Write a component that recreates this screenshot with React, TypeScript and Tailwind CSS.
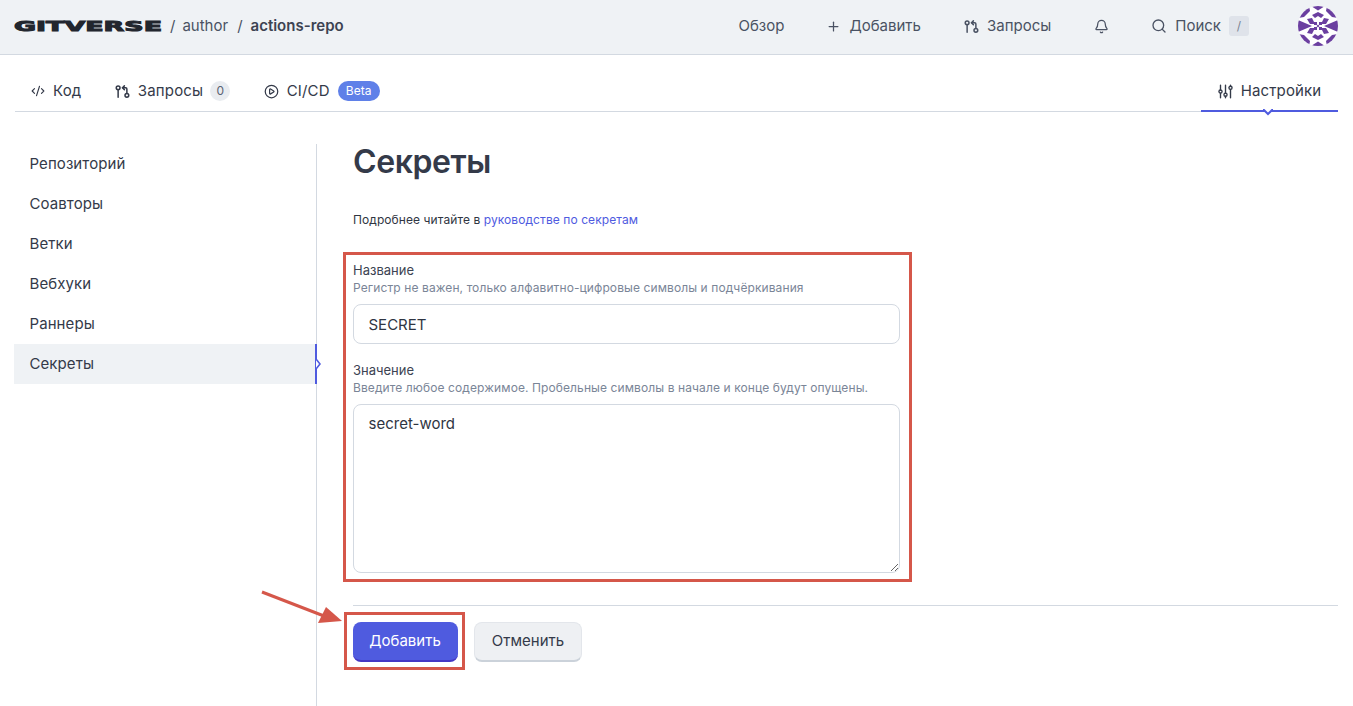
import React from "react";
import { CodeXml, GitPullRequestArrow, CirclePlay, Plus, Bell, Search } from "lucide-react";

function Avatar() {
  const p = "#6b3fa0";
  return (
    <svg width="40" height="40" viewBox="0 0 40 40" className="shrink-0">
      <defs>
        <clipPath id="av"><circle cx="20" cy="20" r="20" /></clipPath>
      </defs>
      <g clipPath="url(#av)">
        <rect width="40" height="40" fill="#ffffff" />
        <g fill={p}>
          {/* top and bottom caps */}
          <path d="M13 0h14l-7 4.5z" />
          <path d="M13 40h14l-7-4.5z" />
          {/* rim corners */}
          <path d="M0 0h11l1 5-6 6-6 1z" />
          <path d="M40 0h-11l-1 5 6 6 6 1z" />
          <path d="M0 40h11l1-5-6-6-6-1z" />
          <path d="M40 40h-11l-1-5 6-6 6-1z" />
          {/* side triangles pointing inwards */}
          <path d="M0 14l14 6-14 6z" />
          <path d="M40 14l-14 6 14 6z" />
          {/* upper wings */}
          <path d="M9 13l5-1 3 6-5 0z" />
          <path d="M31 13l-5-1-3 6 5 0z" />
          <path d="M14 9l6-3 6 3-3 3-3-2-3 2z" />
          {/* lower wings */}
          <path d="M9 27l5 1 3-6-5 0z" />
          <path d="M31 27l-5 1-3-6 5 0z" />
          <path d="M14 31l6 3 6-3-3-3-3 2-3-2z" />
          {/* centre */}
          <rect x="16" y="16" width="3" height="3" />
          <rect x="21" y="16" width="3" height="3" />
          <rect x="16" y="21" width="3" height="3" />
          <rect x="21" y="21" width="3" height="3" />
          <path d="M20 18.5l1.5 1.5-1.5 1.5-1.5-1.5z" />
        </g>
      </g>
    </svg>
  );
}

function Logo() {
  return (
    <svg width="150" height="16" viewBox="0 0 150 16" className="shrink-0">
      <text
        x="0"
        y="13"
        textLength="148"
        lengthAdjust="spacingAndGlyphs"
        fontFamily="'DejaVu Sans', sans-serif"
        fontWeight="900"
        fontSize="14.5"
        fill="#22262e"
        stroke="#22262e"
        strokeWidth="1"
      >
        GITVERSE
      </text>
    </svg>
  );
}

function SettingsIcon() {
  return (
    <svg width="15" height="15" viewBox="0 0 24 24" fill="none" stroke="currentColor" strokeWidth="2.2" strokeLinecap="round">
      <path d="M4 2v7.5M4 14.5V22" />
      <circle cx="4" cy="12" r="2.5" />
      <path d="M12 2v12.5M12 19.5V22" />
      <circle cx="12" cy="17" r="2.5" />
      <path d="M20 2v1.5M20 8.5V22" />
      <circle cx="20" cy="6" r="2.5" />
    </svg>
  );
}

function TopLink({ icon, children }: { icon?: React.ReactNode; children?: React.ReactNode }) {
  return (
    <div className="flex items-center gap-2 text-[15px] text-[#4a5263]">
      {icon}
      {children}
    </div>
  );
}

function Tab({ icon, children, extra }: { icon: React.ReactNode; children: React.ReactNode; extra?: React.ReactNode }) {
  return (
    <div className="flex h-[40px] items-center gap-2 pl-4 pr-[17.5px] text-[15px] text-[#343a49]">
      {icon}
      <span className="tracking-[0.15px]">{children}</span>
      {extra}
    </div>
  );
}

function Caret({ className }: { className: string }) {
  return (
    <svg className={className} width="10" height="7" viewBox="0 0 10 7">
      <path d="M0 0 L5 5 L10 0" fill="#ffffff" stroke="#4f5bdf" strokeWidth="2" />
    </svg>
  );
}

const sideItems = ["Репозиторий", "Соавторы", "Ветки", "Вебхуки", "Раннеры", "Секреты"];

export default function App() {
  return (
    <div className="relative h-[706px] w-[1353px] overflow-hidden bg-white font-['Inter','Noto_Sans',sans-serif]">
      <header className="flex h-[55px] items-center justify-between border-b border-[#d3d9e1] bg-[#eff2f5] pb-[2px] pl-[14px] pr-[15px]">
        <div className="flex items-center text-[15px] text-[#4a5263]">
          <Logo />
          <span className="ml-[6px]">/</span>
          <span className="ml-[7px]">author</span>
          <span className="ml-[9px]">/</span>
          <span className="ml-[8px] font-semibold text-[#3c4352]">actions-repo</span>
        </div>
        <div className="flex items-center">
          <TopLink>Обзор</TopLink>
          <div className="ml-[42px]">
            <TopLink icon={<Plus size={15} strokeWidth={2} />}>Добавить</TopLink>
          </div>
          <div className="ml-[43px]">
            <TopLink icon={<GitPullRequestArrow size={15} strokeWidth={2.4} />}>Запросы</TopLink>
          </div>
          <div className="ml-[43px]">
            <Bell size={15} strokeWidth={2} className="text-[#4a5263]" />
          </div>
          <div className="ml-[43px] flex items-center gap-2">
            <TopLink icon={<Search size={16} strokeWidth={2} className="-ml-px" />}>Поиск</TopLink>
            <span className="flex h-[20px] w-[20px] items-center justify-center rounded-[3px] bg-[#dfe3ea] text-[12px] text-[#7a8394]">/</span>
          </div>
          <div className="ml-[49px]">
            <Avatar />
          </div>
        </div>
      </header>

      <nav className="relative mx-[15px] flex h-[57px] items-end justify-between border-b border-[#d3d9e1]">
        <div className="flex items-center">
          <Tab icon={<CodeXml size={14} strokeWidth={2} />}>Код</Tab>
          <Tab
            icon={<GitPullRequestArrow size={15} strokeWidth={2.4} />}
            extra={<span className="-ml-px flex h-[20px] w-[20px] items-center justify-center rounded-full bg-[#e9ecf0] text-[12px] text-[#5a6272]">0</span>}
          >
            Запросы
          </Tab>
          <Tab
            icon={<CirclePlay size={15} strokeWidth={2} />}
            extra={<span className="flex h-[20px] w-[42px] items-center justify-center rounded-full bg-[#5f80e8] text-[12px] text-white">Beta</span>}
          >
            CI/CD
          </Tab>
        </div>
        <div className="relative -mb-px flex h-[40px] w-[137px] items-center justify-center gap-2 border-b-2 border-[#4f5bdf] text-[15px] text-[#343a49]">
          <SettingsIcon />
          <span className="tracking-[0.1px]">Настройки</span>
          <Caret className="absolute -bottom-[6px] left-[62px]" />
        </div>
      </nav>

      <div className="flex pl-[14px] pr-[15px]">
        <aside className="mt-[32px] h-[563px] w-[303px] shrink-0 border-r border-[#d3d9e1]">
          {sideItems.map((item) => (
            <div
              key={item}
              className={
                item === "Секреты"
                  ? "relative flex h-[40px] items-center bg-[#eff2f5] pl-[15.5px] text-[15px] tracking-[0.08px] text-[#343a49]"
                  : "flex h-[40px] items-center pl-[15.5px] text-[15px] tracking-[0.08px] text-[#343a49]"
              }
            >
              {item}
              {item === "Секреты" && (
                <>
                  <span className="absolute -right-[1px] top-0 h-full w-[2px] bg-[#4f5bdf]" />
                  <svg className="absolute -right-[5px] top-[14px]" width="5" height="12" viewBox="0 0 5 12">
                    <path d="M0 1 L4 6 L0 11" fill="#ffffff" stroke="#4f5bdf" strokeWidth="1.6" />
                  </svg>
                </>
              )}
            </div>
          ))}
        </aside>

        <main className="ml-[36px] min-w-0 flex-1 pt-[30px]">
          <h1 className="text-[32px] font-semibold leading-[40px] tracking-[-0.4px] text-[#343a49]">Секреты</h1>
          <p className="mt-[30px] text-[12px] leading-[16px] tracking-[0.08px] text-[#2f3542]">
            Подробнее читайте в <span className="text-[#4f5bdf]">руководстве по секретам</span>
          </p>

          <div className="mt-[34px] w-[547px]">
            <label className="block text-[13px] leading-[16px] text-[#3c4352]">Название</label>
            <p className="text-[12px] leading-[20px] tracking-[0.1px] text-[#7a8597]">Регистр не важен, только алфавитно-цифровые символы и подчёркивания</p>
            <input
              readOnly
              value="SECRET"
              className="mt-[6px] block h-[40px] w-full rounded-[8px] border border-[#d3d9e1] bg-white px-[14.5px] font-['Inter'] text-[15px] text-[#2f3542] outline-none"
            />
            <label className="mt-[18px] block text-[13px] leading-[16px] text-[#3c4352]">Значение</label>
            <p className="text-[12px] leading-[20px] tracking-[0.1px] text-[#7a8597]">Введите любое содержимое. Пробельные символы в начале и конце будут опущены.</p>
            <textarea
              readOnly
              value="secret-word"
              className="mt-[6px] block h-[169px] w-full rounded-[8px] border border-[#d3d9e1] bg-white px-[14.5px] py-[9px] font-['Inter'] text-[15px] leading-[20px] text-[#2f3542] outline-none"
            />
          </div>

          <div className="mt-[32px] border-t border-[#d3d9e1] pt-[16px]">
            <div className="flex gap-4">
              <button className="h-[40px] w-[105px] rounded-[8px] border-b-2 border-[#4437c4] bg-[#4f5bdf] pr-px text-[15px] text-white">Добавить</button>
              <button className="h-[40px] w-[108px] rounded-[8px] border border-b-2 border-[#e3e6eb] border-b-[#cbd2da] bg-[#eef0f3] text-[15px] text-[#343a49]">Отменить</button>
            </div>
          </div>
        </main>
      </div>

      {/* annotations drawn over the screenshot */}
      <div className="pointer-events-none absolute left-[343px] top-[252px] h-[330px] w-[569px] border-[3px] border-[#d5574a]" />
      <div className="pointer-events-none absolute left-[344px] top-[612px] h-[58px] w-[121px] border-[3px] border-[#d5574a]" />
      <svg className="pointer-events-none absolute left-[258px] top-[586px]" width="90" height="44" viewBox="0 0 90 44">
        <path d="M4 6 L66 30" stroke="#d5574a" strokeWidth="3" fill="none" />
        <path d="M68 21 L84 35 L60 37 Z" fill="#d5574a" />
      </svg>
    </div>
  );
}
